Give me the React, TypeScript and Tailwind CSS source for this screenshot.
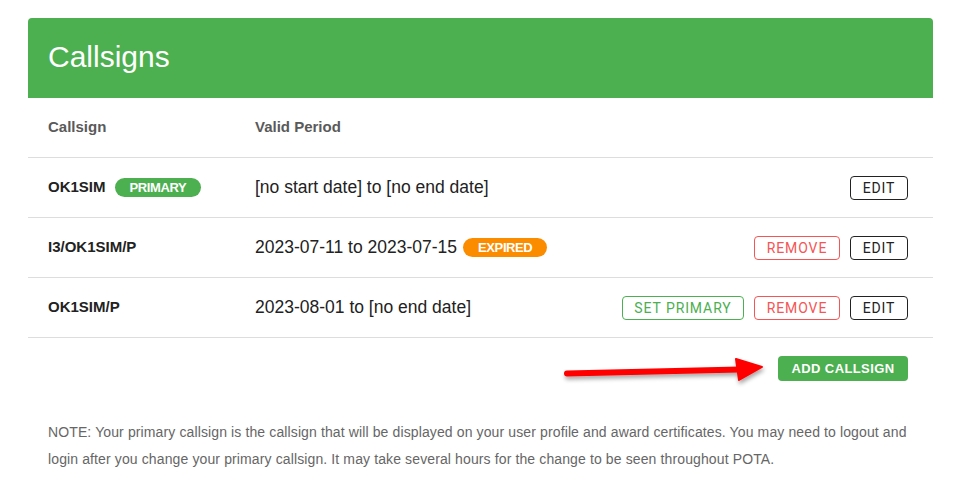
import React from "react";

type Row = {
  callsign: string;
  badge?: "primary";
  period: string;
  expired?: boolean;
  canSetPrimary?: boolean;
  canRemove?: boolean;
};

const rows: Row[] = [
  { callsign: "OK1SIM", badge: "primary", period: "[no start date] to [no end date]" },
  { callsign: "I3/OK1SIM/P", period: "2023-07-11 to 2023-07-15", expired: true, canRemove: true },
  { callsign: "OK1SIM/P", period: "2023-08-01 to [no end date]", canSetPrimary: true, canRemove: true },
];

const sans = "font-['Liberation_Sans',Arial,sans-serif]";
const roboto = "font-['Roboto',Arial,sans-serif]";

const Pill = ({ label, color }: { label: string; color: string }) => (
  <span
    className={`${color} inline-flex h-[19px] items-center rounded-full px-[15px] text-[13px] font-bold tracking-[-0.4px] text-white`}
  >
    {label}
  </span>
);

const OutlineBtn = ({ label, tone }: { label: string; tone: string }) => (
  <button
    className={`${roboto} ${tone} flex h-[24px] items-center justify-center rounded-[4px] border bg-white text-[14px] leading-none tracking-[0.9px]`}
  >
    {label}
  </button>
);

const Arrow = () => (
  <svg
    className="pointer-events-none absolute left-[560px] top-[352px]"
    width="210"
    height="40"
    viewBox="0 0 210 40"
  >
    <defs>
      <filter id="sh" x="-10%" y="-50%" width="120%" height="200%">
        <feDropShadow dx="1" dy="3" stdDeviation="2" floodColor="#000" floodOpacity="0.35" />
      </filter>
    </defs>
    <g filter="url(#sh)">
      <path d="M7 21.5 L180 17.5" stroke="#f00" strokeWidth="6" strokeLinecap="round" fill="none" />
      <path d="M176 7 L202 15 L179 28 Z" fill="#f00" stroke="#f00" strokeWidth="2" strokeLinejoin="round" />
    </g>
  </svg>
);

export default function App() {
  return (
    <div className={`${sans} relative min-h-[496px] bg-white px-[28px] pt-[18px]`}>
      <div className="w-[905px]">
        <div className="flex h-[80px] items-center rounded-t-[4px] bg-[#4caf50] pb-[4px] pl-[20px]">
          <h1 className="text-[30px] font-normal text-white">Callsigns</h1>
        </div>

        <div className="flex h-[60px] items-center border-b border-[#dddddd] text-[15px] font-bold text-[#5a5a5a]">
          <div className="w-[227px] pl-[20px]">Callsign</div>
          <div>Valid Period</div>
        </div>

        {rows.map((r) => (
          <div key={r.callsign} className="flex h-[60px] items-center border-b border-[#dddddd] pr-[25px]">
            <div className="flex w-[227px] items-center gap-[9px] pl-[20px] text-[15px] font-bold text-[#222]">
              {r.callsign}
              {r.badge === "primary" && <Pill label="PRIMARY" color="bg-[#4caf50]" />}
            </div>
            <div className="flex items-center gap-[6px] text-[17.5px] text-[#222]">
              {r.period}
              {r.expired && <Pill label="EXPIRED" color="bg-[#fb8c00]" />}
            </div>
            <div className="ml-auto flex items-center gap-[10px]">
              {r.canSetPrimary && (
                <div className="w-[122px]">
                  <OutlineBtn label="SET PRIMARY" tone="w-full border-[#4caf50] text-[#4caf50]" />
                </div>
              )}
              {r.canRemove && (
                <div className="w-[86px]">
                  <OutlineBtn label="REMOVE" tone="w-full border-[#f55555] text-[#f55555]" />
                </div>
              )}
              <div className="w-[58px]">
                <OutlineBtn label="EDIT" tone="w-full border-[#222] text-[#222]" />
              </div>
            </div>
          </div>
        ))}

        <div className="flex justify-end pr-[25px] pt-[18px]">
          <button
            className={`${sans} flex h-[25px] w-[130px] items-center justify-center rounded-[4px] bg-[#4caf50] text-[13px] font-bold tracking-[0.4px] text-white`}
          >
            ADD CALLSIGN
          </button>
        </div>

        <p className="px-[20px] pt-[38px] text-[14px] leading-[27px] tracking-[0.12px] text-[#666666]">
          NOTE: Your primary callsign is the callsign that will be displayed on your user profile and award certificates. You may need to logout and
          <br />
          login after you change your primary callsign. It may take several hours for the change to be seen throughout POTA.
        </p>
      </div>
      <Arrow />
    </div>
  );
}
